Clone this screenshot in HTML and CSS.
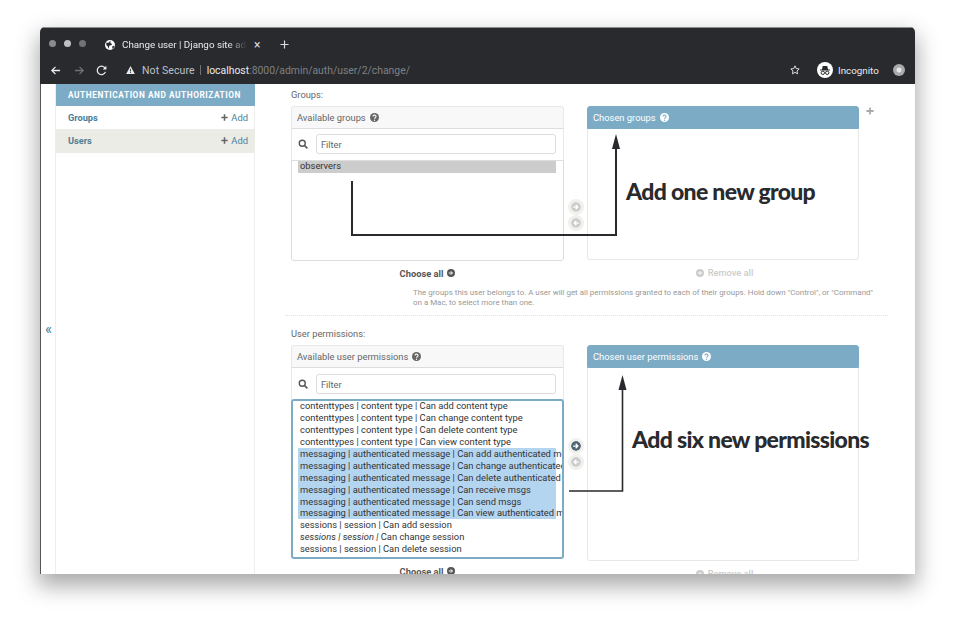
FILE: index.html
```html
<!DOCTYPE html>
<html lang="en">
<head>
<meta charset="utf-8">
<title>Change user | Django site admin</title>
<link rel="stylesheet" href="styles.css">
</head>
<body>
<svg class="defs" width="0" height="0" aria-hidden="true">
  <symbol id="help" viewBox="0 0 16 16"><circle cx="8" cy="8" r="8" fill="currentColor"/><path d="M5.300 6.200a2.700 2.500 0 1 1 4.300 2c-1 .7-1.500 1-1.500 2" fill="none" stroke="var(--help-ink)" stroke-width="2"/><circle cx="8" cy="12.800" r="1.200" fill="var(--help-ink)"/></symbol>
  <symbol id="search" viewBox="0 0 16 16"><circle cx="6.800" cy="6.800" r="4.800" fill="none" stroke="currentColor" stroke-width="2.200"/><path d="M10.400 10.400 15 15" stroke="currentColor" stroke-width="2.600"/></symbol>
  <symbol id="go" viewBox="0 0 16 16"><circle cx="8" cy="8" r="8" fill="currentColor"/><path d="M3.500 8h7M7.500 4.500 11 8l-3.500 3.500" fill="none" stroke="#fff" stroke-width="2"/></symbol>
  <symbol id="back" viewBox="0 0 16 16"><circle cx="8" cy="8" r="8" fill="currentColor"/><path d="M12.500 8h-7M8.500 4.500 5 8l3.500 3.500" fill="none" stroke="#fff" stroke-width="2"/></symbol>
  <symbol id="plus" viewBox="0 0 10 10"><path d="M5 .5v9M.5 5h9" stroke="currentColor" stroke-width="2.200"/></symbol>
</svg>

<div class="window">
  <header class="chrome">
    <div class="tabstrip">
      <div class="lights"><i class="light l1"></i><i class="light l2"></i><i class="light l3"></i></div>
      <div class="tab">
        <svg class="globe" viewBox="0 0 16 16"><circle cx="8" cy="8" r="8" fill="#fff"/><path d="M2 4c2 0 3 1 4 0s1-2 3-3c0 2-1 3 0 4s3 0 2 2-3 1-4 2 0 3-1 5C5 12 5 10 3 9 2 8 2 6 2 4zM12 10c1-1 2-1 3-1 0 2-1 4-3 5-1-1 0-3 0-4z" fill="#292a2d"/></svg>
        <span class="tab-title">Change user | Django site adm</span>
        <span class="tab-close">×</span>
      </div>
      <svg class="newtab" viewBox="0 0 10 10"><path d="M5 .5v9M.5 5h9" stroke="#dadce0" stroke-width="1.300"/></svg>
    </div>
    <div class="toolbar">
      <svg class="tool-arrow" viewBox="0 0 12 12"><path d="M11 6H2M6 2 2 6l4 4" fill="none" stroke="#e8eaed" stroke-width="1.400"/></svg>
      <svg class="tool-arrow dim" viewBox="0 0 12 12"><path d="M1 6h9M6 2l4 4-4 4" fill="none" stroke="#6f7174" stroke-width="1.400"/></svg>
      <svg class="tool-reload" viewBox="0 0 12 12"><path d="M10.300 7.500A4.600 4.600 0 1 1 9.500 2.800L10.800 4" fill="none" stroke="#e8eaed" stroke-width="1.400"/><path d="M11.300 .8v4h-4z" fill="#e8eaed"/></svg>
      <div class="omnibox">
        <svg class="warn" viewBox="0 0 12 11"><path d="M6 0 12 11H0z" fill="#e8eaed"/><path d="M6 4v3.500M6 8.300v1.200" stroke="#292a2d" stroke-width="1.200"/></svg>
        <span class="insecure">Not Secure</span>
        <span class="sep"></span>
        <span class="host">localhost</span><span class="path">:8000/admin/auth/user/2/change/</span>
      </div>
      <svg class="star" viewBox="0 0 12 12"><path d="m6 1 1.500 3.300 3.500.4-2.600 2.400.7 3.500L6 8.800l-3.100 1.800.7-3.500L1 4.700l3.500-.4z" fill="none" stroke="#e8eaed" stroke-width="1.100"/></svg>
      <div class="profile">
        <svg class="spy" viewBox="0 0 16 16"><circle cx="8" cy="8" r="8" fill="#fff"/><path d="M3 7.500h10v1H3zM5 7.500l.7-3.500h4.600l.7 3.500z" fill="#292a2d"/><circle cx="5.800" cy="10.800" r="1.700" fill="none" stroke="#292a2d"/><circle cx="10.200" cy="10.800" r="1.700" fill="none" stroke="#292a2d"/></svg>
        <span class="profile-name">Incognito</span>
      </div>
      <svg class="menu-dot" viewBox="0 0 12 12"><circle cx="6" cy="6" r="6" fill="#a9aaac"/><circle cx="6" cy="6" r="2.500" fill="#e8e8e8"/></svg>
    </div>
  </header>

  <div class="page">
    <div class="toggle"><span>«</span></div>
    <nav class="sidebar">
      <div class="app-caption">AUTHENTICATION AND AUTHORIZATION</div>
      <div class="model-row"><span class="model-name">Groups</span><span class="add"><svg class="add-plus" viewBox="0 0 10 10"><use href="#plus"/></svg>Add</span></div>
      <div class="model-row current"><span class="model-name">Users</span><span class="add"><svg class="add-plus" viewBox="0 0 10 10"><use href="#plus"/></svg>Add</span></div>
    </nav>
    <main class="content">
      <section class="field first">
        <div class="field-label">Groups:</div>
        <div class="selector">
          <div class="sel-box">
            <div class="sel-title">Available groups <svg class="help"><use href="#help"/></svg></div>
            <div class="filter-row"><svg class="search"><use href="#search"/></svg><div class="filter-input">Filter</div></div>
            <div class="options short">
              <div class="opt grey">observers</div>
            </div>
            <div class="choose-all">Choose all <svg class="round"><use href="#go"/></svg></div>
          </div>
          <div class="mover"><svg class="round off"><use href="#go"/></svg><svg class="round off"><use href="#back"/></svg></div>
          <div class="sel-box">
            <div class="sel-title chosen">Chosen groups <svg class="help inv"><use href="#help"/></svg></div>
            <div class="chosen-body short"></div>
            <div class="remove-all"><svg class="round off"><use href="#back"/></svg> Remove all</div>
          </div>
          <svg class="related" viewBox="0 0 10 10"><use href="#plus"/></svg>
        </div>
        <p class="help-text">The groups this user belongs to. A user will get all permissions granted to each of their groups. Hold down "Control", or "Command" on a Mac, to select more than one.</p>
      </section>
      <section class="field">
        <div class="field-label">User permissions:</div>
        <div class="selector">
          <div class="sel-box">
            <div class="sel-title">Available user permissions <svg class="help"><use href="#help"/></svg></div>
            <div class="filter-row"><svg class="search"><use href="#search"/></svg><div class="filter-input">Filter</div></div>
            <div class="options tall focus">
              <div class="opt">contenttypes | content type | Can add content type</div>
              <div class="opt">contenttypes | content type | Can change content type</div>
              <div class="opt">contenttypes | content type | Can delete content type</div>
              <div class="opt">contenttypes | content type | Can view content type</div>
              <div class="opt blue">messaging | authenticated message | Can add authenticated message</div>
              <div class="opt blue">messaging | authenticated message | Can change authenticated message</div>
              <div class="opt blue">messaging | authenticated message | Can delete authenticated message</div>
              <div class="opt blue">messaging | authenticated message | Can receive msgs</div>
              <div class="opt blue">messaging | authenticated message | Can send msgs</div>
              <div class="opt blue">messaging | authenticated message | Can view authenticated message</div>
              <div class="opt">sessions | session | Can add session</div>
              <div class="opt"><em>sessions | session |</em> Can change session</div>
              <div class="opt">sessions | session | Can delete session</div>
              <div class="opt">sessions | session | Can view session</div>
            </div>
            <div class="choose-all">Choose all <svg class="round"><use href="#go"/></svg></div>
          </div>
          <div class="mover"><svg class="round on"><use href="#go"/></svg><svg class="round off"><use href="#back"/></svg></div>
          <div class="sel-box">
            <div class="sel-title chosen">Chosen user permissions <svg class="help inv"><use href="#help"/></svg></div>
            <div class="chosen-body tall"></div>
            <div class="remove-all"><svg class="round off"><use href="#back"/></svg> Remove all</div>
          </div>
        </div>
      </section>
    </main>
    <svg class="callouts" viewBox="0 0 875 490" aria-hidden="true">
      <path d="M312 97v54h264V61" fill="none" stroke="#292a2d" stroke-width="2"/>
      <path d="M576 50l4 15h-8z" fill="#292a2d"/>
      <path d="M529 407h53.500V300" fill="none" stroke="#292a2d" stroke-width="1.600"/>
      <path d="M582.500 291l4 15h-8z" fill="#292a2d"/>
    </svg>
    <div class="note note-one">Add one new group</div>
    <div class="note note-two">Add six new permissions</div>
  </div>
</div>
</body>
</html>
```

FILE: styles.css
```css
* { box-sizing: border-box; }
html, body { margin: 0; height: 100%; }
body {
  background: #fff;
  padding: 27px 40px 0;
  overflow: hidden;
  font-family: Roboto, "Liberation Sans", sans-serif;
  --help-ink: #fff;
}
.defs { position: absolute; }

.window {
  width: 875px;
  height: 547px;
  display: flex;
  flex-direction: column;
  background: #fff;
  border-radius: 5px 5px 0 0;
  box-shadow: 0 10px 22px 2px rgba(0, 0, 0, .34);
  overflow: hidden;
}

/* browser chrome */
.chrome { flex: none; height: 57px; background: #292a2d; border-top: 1px solid #8d8e90; color: #e8eaed; }
.tabstrip { height: 33px; display: flex; align-items: center; }
.lights { display: flex; gap: 8px; width: 58px; padding: 0 0 3px 9px; flex: none; }
.light { width: 7px; height: 7px; border-radius: 50%; }
.l1 { background: #8a8b8d; }
.l2 { background: #bfc0c1; }
.l3 { background: #717274; }
.tab { width: 170px; height: 24px; display: flex; align-items: center; padding-left: 7px; font-size: 9.800px; color: #e8eaed; }
.globe { width: 10px; height: 10px; flex: none; margin-right: 7px; }
.tab-title { width: 125px; white-space: nowrap; overflow: hidden; -webkit-mask-image: linear-gradient(90deg, #000 85%, transparent); mask-image: linear-gradient(90deg, #000 85%, transparent); }
.tab-close { margin-left: 7px; font-size: 12px; color: #dadce0; }
.newtab { width: 9px; height: 9px; margin-left: 12px; }

.toolbar { height: 18px; display: flex; align-items: center; padding-left: 10px; }
.tool-arrow { width: 11px; height: 11px; margin-right: 13px; flex: none; }
.tool-arrow.dim { margin-right: 11px; }
.tool-reload { width: 11px; height: 11px; flex: none; margin-right: 19px; }
.omnibox { display: flex; align-items: center; width: 533px; font-size: 10.500px; white-space: nowrap; flex: none; }
.warn { width: 9px; height: 8px; margin-right: 7px; flex: none; }
.insecure { color: #bdc1c6; letter-spacing: .1px; }
.sep { width: 1px; height: 10px; background: #6f7174; margin: 0 6px 0 5px; }
.host { color: #e8eaed; font-size: 10.400px; }
.path { color: #7e8184; font-size: 10.400px; }
.star { width: 10px; height: 10px; margin-left: 131px; flex: none; }
.profile { display: flex; align-items: center; margin-left: 17px; font-size: 9.800px; flex: none; }
.spy { width: 16px; height: 16px; margin-right: 5px; }
.menu-dot { width: 12px; height: 12px; margin-left: 14px; flex: none; }

/* page */
.page { position: relative; flex: 1; display: flex; min-height: 0; overflow: hidden; }
.toggle { width: 16px; flex: none; border-right: 1px solid #eee; border-left: 1px solid #555; color: #447e9b; font-size: 15px; padding-top: 236px; padding-left: 4px; }
.sidebar { width: 199px; flex: none; border-right: 1px solid #eee; }
.app-caption { height: 21.500px; background: #7cabc6; color: #fff; font-weight: 700; font-size: 8.300px; letter-spacing: .55px; display: flex; align-items: center; padding-left: 12px; white-space: nowrap; margin-right: -1px; }
.model-row { height: 23.500px; display: flex; align-items: center; justify-content: space-between; padding: 0 7px 0 12px; font-size: 9.200px; margin-right: -1px; }
.model-row.current { background: #ecece7; }
.model-name { color: #447e9b; font-weight: 700; }
.current .model-name { color: #4f7f95; }
.add { color: #447e9b; display: flex; align-items: center; font-size: 9.400px; }
.add-plus { width: 7px; height: 7px; margin-right: 3px; color: #666; }

.content { flex: 1; padding: 0 27px 0 36px; min-width: 0; }
.field { position: relative; }
.field.first { padding-bottom: 7px; border-bottom: 1px dotted #e3e3e3; margin-left: -6px; padding-left: 6px; }
.field-label { height: 23px; padding-bottom: 1px; display: flex; align-items: center; font-size: 9.300px; color: #666; }
.first .field-label { height: 22px; padding-bottom: 1px; }
.field:not(.first) { padding-top: 6px; }

.selector { position: relative; display: flex; width: 568px; }
.sel-box { width: 273px; flex: none; position: relative; }
.sel-box:last-of-type { width: 272px; }
.sel-title { height: 23px; display: flex; align-items: center; gap: 4px; padding-left: 5px; font-size: 9.350px; color: #666; background: #f8f8f8; border: 1px solid #e8e8e8; border-bottom: 1px solid #ddd; border-radius: 3px 3px 0 0; }
.sel-title.chosen { background: #7cabc6; color: #fff; border-color: #7cabc6; }
.help { width: 9px; height: 9px; color: #666; }
.help.inv { color: #fff; --help-ink: #7cabc6; }
.filter-row { height: 32px; display: flex; align-items: center; padding: 0 7px 0 6px; border-left: 1px solid #e8e8e8; border-right: 1px solid #e8e8e8; }
.first .filter-row { padding-bottom: 2px; }
.search { width: 10px; height: 10px; flex: none; color: #555; margin-right: 8px; }
.filter-input { flex: 1; height: 20px; border: 1px solid #ddd; border-radius: 3px; display: flex; align-items: center; padding-left: 4px; font-size: 9.200px; color: #666; }
.options { background: #fff; border: 1px solid #ddd; border-radius: 0 0 3px 3px; overflow: hidden; font-size: 9.350px; color: #333; margin-top: -1px; padding: 0 0 0 6px; }
.options.short { height: 101px; }
.options.tall { height: 160px; }
.options.focus { border: 2px solid #7cabc6; border-radius: 3px; padding-left: 5px; }
.focus .opt:first-child { margin-top: -1px; }
.opt { width: 258px; height: 11.900px; line-height: 11.900px; padding-left: 2px; white-space: nowrap; }
.opt.grey { background: #ccc; height: 12px; line-height: 10.500px; }
.opt.blue { background: #b4d5f0; }
.choose-all, .remove-all { height: 24px; display: flex; align-items: center; justify-content: center; gap: 4px; font-size: 9.300px; font-weight: 700; }
.choose-all { color: #555; }
.remove-all { color: #ccc; font-weight: 500; padding: 1px 0 0 3px; }
.round { width: 8px; height: 8px; color: #555; flex: none; }
.round.off { color: #ccc; }
.mover { width: 23px; flex: none; margin-top: 93px; align-self: flex-start; display: flex; flex-direction: column; align-items: center; gap: 6px; padding: 3px 4px; height: 31px; }
.mover .round { width: 10px; height: 10px; box-shadow: 0 0 0 3px #f0f0ec; border-radius: 50%; }
.mover .round.on { color: #516573; }
.chosen-body { border: 1px solid #e8e8e8; border-top: 0; border-radius: 0 0 3px 3px; }
.chosen-body.short { height: 131px; }
.chosen-body.tall { height: 193px; }
.related { position: absolute; left: 575px; top: 1px; width: 8px; height: 8px; color: #aaa; }
.help-text { margin: 0 0 0 122px; width: 464px; font-size: 7.950px; line-height: 10.200px; color: #999; padding-top: 3px; }

/* annotations laid over the page */
.callouts { position: absolute; left: 0; top: 0; width: 875px; height: 490px; pointer-events: none; }
.note { position: absolute; font-family: Lato, "Open Sans", sans-serif; font-weight: 900; color: #292a2d; font-size: 23px; line-height: 26px; letter-spacing: -.68px; white-space: nowrap; }
.note-one { left: 586px; top: 94px; }
.note-two { left: 592px; top: 342px; }
```
